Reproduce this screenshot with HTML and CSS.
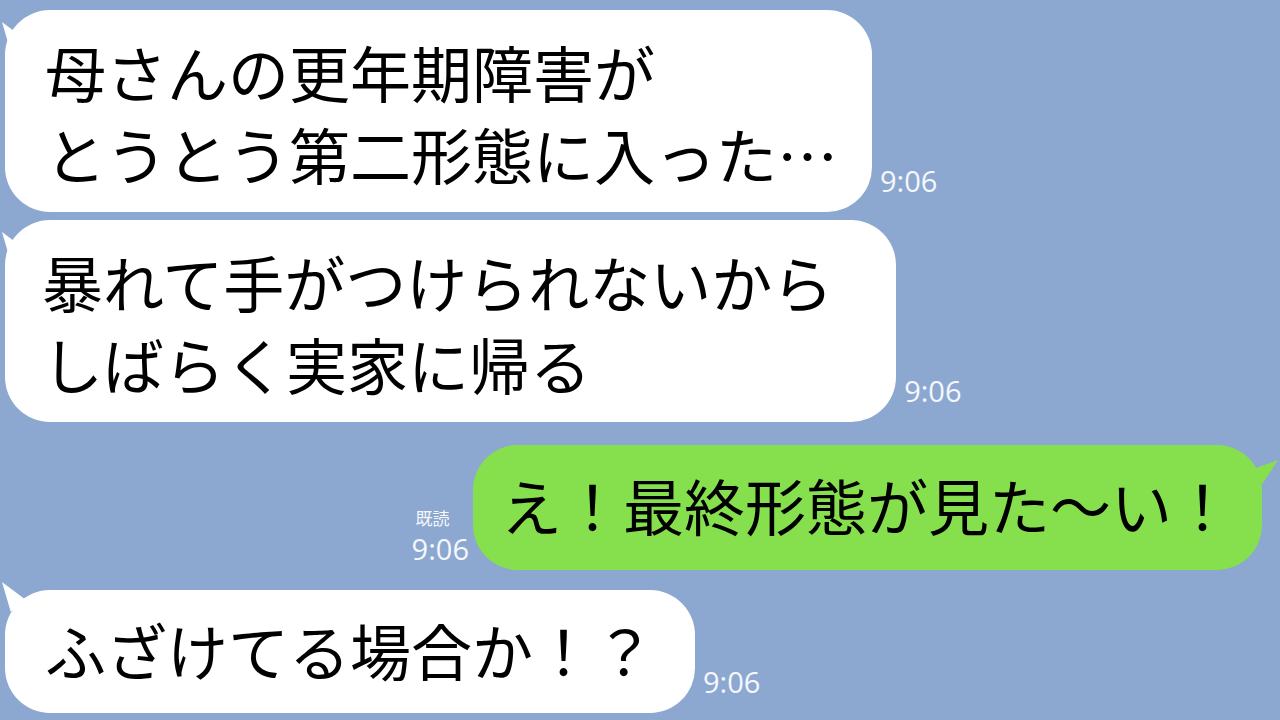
FILE: index.html
```html
<!DOCTYPE html>
<html lang="ja">

<head>
    <meta charset="UTF-8">
    <title>chat</title>
    <link rel="stylesheet" href="styles.css">
</head>

<body>
<div id="chat">
    <div class="row">
        <div class="bubble in first">母さんの更年期障害が<br>とうとう第二形態に入った…</div>
        <div class="time">9:06</div>
    </div>

    <div class="row second-row">
        <div class="bubble in second">暴れて手がつけられないから<br>しばらく実家に帰る</div>
        <div class="time">9:06</div>
    </div>

    <div class="row out-row">
        <div class="meta">
            <div class="read">既読</div>
            <div class="time out-time">9:06</div>
        </div>
        <div class="bubble out">え！最終形態が見た〜い！</div>
    </div>

    <div class="row last-row">
        <div class="bubble in last">ふざけてる場合か！？</div>
        <div class="time">9:06</div>
    </div>
</div>
</body>
</html>
```

FILE: styles.css
```css
* {
    margin: 0;
    padding: 0;
}

html {
    height: 100%;
    width: 100%;
    overflow: hidden;
}

body {
    height: 100%;
    background-color: #8ca8d0;
    font-family: "Noto Sans CJK JP", "Noto Sans", sans-serif;
}

#chat {
    display: flex;
    flex-direction: column;
    padding: 10px 18px 0 5px;
}

.row {
    display: flex;
    align-items: flex-end;
}

.second-row {
    margin-top: 8px;
}

.out-row {
    margin-top: 23px;
    justify-content: flex-end;
}

.last-row {
    margin-top: 20px;
}

.bubble {
    position: relative;
    font-size: 61px;
    line-height: 82px;
    color: #000000;
    white-space: nowrap;
    border-radius: 45px;
}

.in {
    background-color: #ffffff;
}

.in::before {
    content: "";
    position: absolute;
    left: -3px;
    top: 12px;
    width: 22px;
    height: 30px;
    background-color: #ffffff;
    clip-path: polygon(0 0, 100% 55%, 40% 100%);
}

.first {
    padding: 21px 34px 17px 40px;
}

.second {
    padding: 21px 63px 17px 37px;
}

.last {
    padding: 19px 40px 22px 40px;
}

.last::before {
    top: -8px;
}

.out {
    background-color: #86e04e;
    padding: 19px 29px 24px 28px;
}

.out::after {
    content: "";
    position: absolute;
    right: -16px;
    top: 15px;
    width: 26px;
    height: 24px;
    background-color: #86e04e;
    clip-path: polygon(100% 0, 40% 100%, 0 40%);
}

.time {
    font-family: "Open Sans", "Liberation Sans", sans-serif;
    font-size: 29px;
    line-height: 1;
    color: #f4f7fb;
    margin-left: 8px;
    margin-bottom: 17px;
}

.meta {
    display: flex;
    flex-direction: column;
    margin-right: 4px;
    margin-bottom: 7px;
}

.read {
    font-size: 17px;
    line-height: 1;
    color: #f4f7fb;
    margin-left: 4px;
    margin-bottom: 8px;
}

.out-time {
    margin-left: 0;
    margin-bottom: 0;
}
```
